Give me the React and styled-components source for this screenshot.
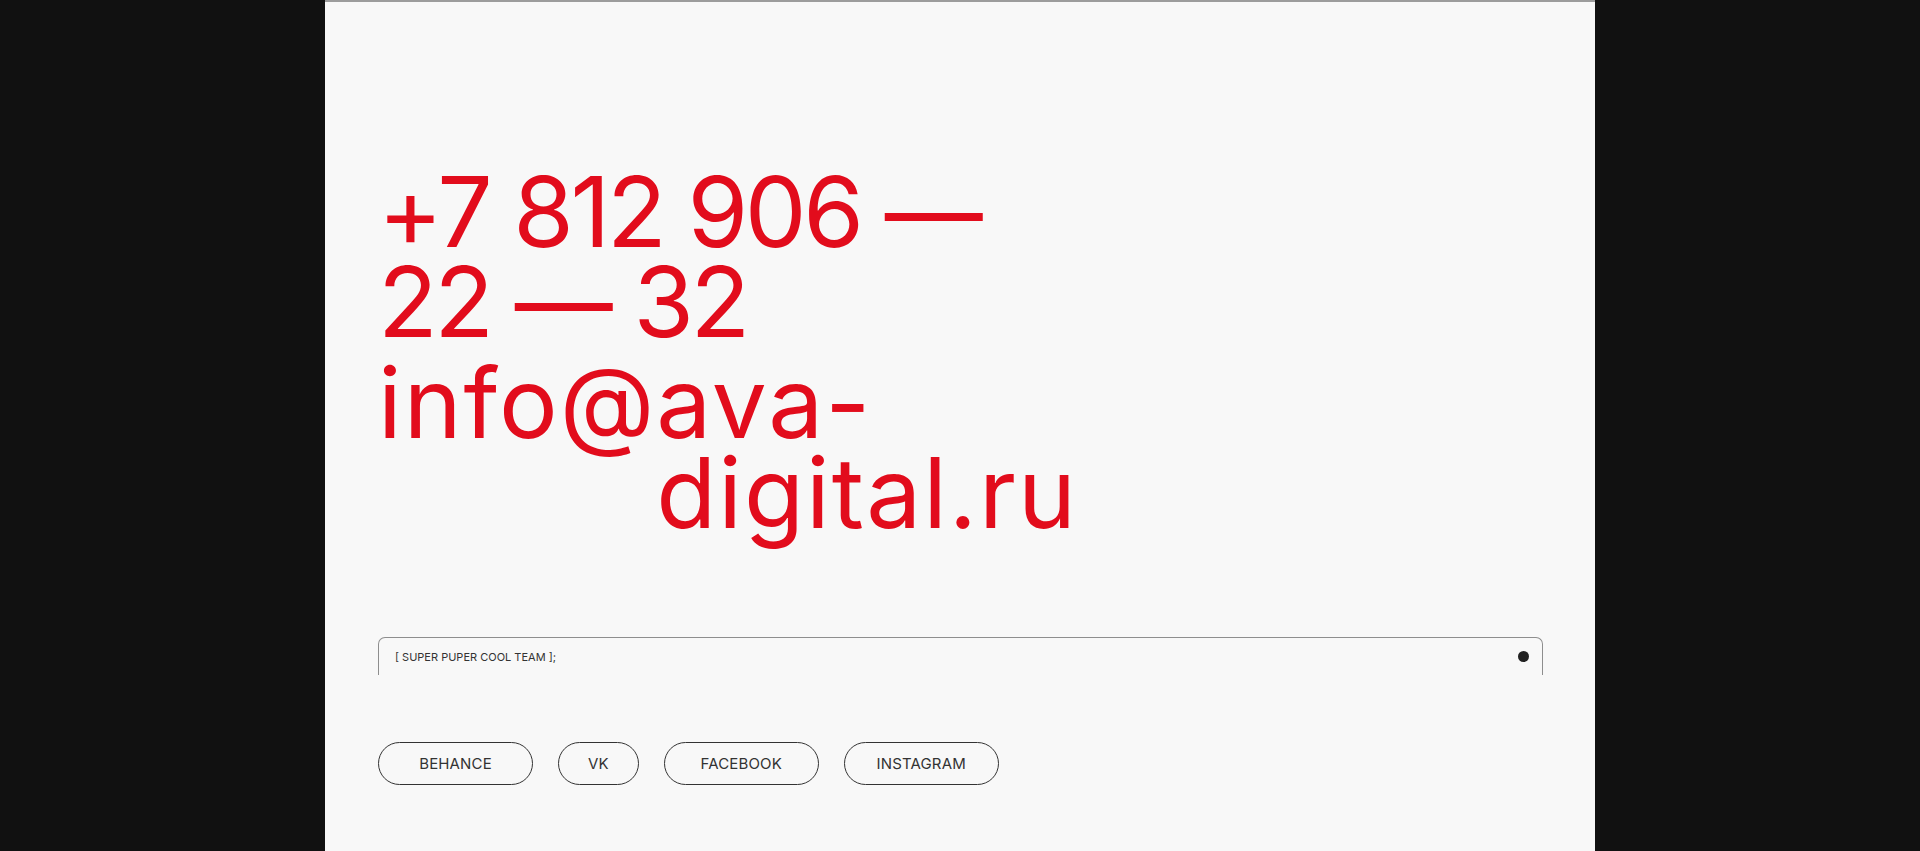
import React from "react";
import styled, { createGlobalStyle } from "styled-components";

const GlobalStyle = createGlobalStyle`
    html, body {
        margin: 0;
        padding: 0;
        background: #111111;
    }
    * {
        box-sizing: border-box;
    }
`

const Page = styled.div`
    display: flex;
    justify-content: center;
    min-height: 100vh;
    background: #111111;
`

const Panel = styled.main`
    width: 1270px;
    min-height: 100vh;
    background: #f8f8f8;
    border-top: 2px solid #9c9c9c;
    padding: 165px 52px 0 53px;
    display: flex;
    flex-direction: column;
    font-family: Inter, "Liberation Sans", sans-serif;
`

const Contacts = styled.div`
    color: #e20c1c;
    font-size: 98px;
    font-weight: 400;
    line-height: 90px;
`

const Phone = styled.div`
    margin-bottom: 11px;
    letter-spacing: -0.035em;
`

const Email = styled.div`
    display: flex;
    align-items: flex-start;
    letter-spacing: 0.02em;
`

const Domain = styled.span`
    display: block;
`

const TeamBar = styled.div`
    margin-top: 99px;
    height: 38px;
    display: flex;
    align-items: center;
    justify-content: space-between;
    padding: 0 13px 0 16px;
    border: 1px solid #8e8e8e;
    border-bottom: none;
    border-radius: 7px 7px 0 0;
`

const TeamLabel = styled.span`
    font-size: 11px;
    color: #333333;
    letter-spacing: 0;
`

const Dot = styled.span`
    width: 11px;
    height: 11px;
    border-radius: 50%;
    background: #222222;
`

const Socials = styled.nav`
    display: flex;
    gap: 25px;
    margin-top: 67px;
`

const SocialButton = styled.a`
    min-width: ${props => props.compact ? '80px' : '155px'};
    height: 43px;
    padding: 0 29px;
    display: flex;
    align-items: center;
    justify-content: center;
    border: 1.5px solid #333333;
    border-radius: 22px;
    font-size: 15px;
    color: #333333;
    text-transform: uppercase;
    text-decoration: none;
    letter-spacing: 0.01em;
`

const socials = ['Behance', 'VK', 'Facebook', 'Instagram']

const App = () => {

    return (
        <Page>
            <GlobalStyle/>
            <Panel>
                <Contacts>
                    <Phone>
                        +7 812 906 —<br/>
                        22 — 32
                    </Phone>
                    <Email>
                        <span>info@</span>
                        <Domain>ava-<br/>digital.ru</Domain>
                    </Email>
                </Contacts>
                <TeamBar>
                    <TeamLabel>[ SUPER PUPER COOL TEAM ];</TeamLabel>
                    <Dot/>
                </TeamBar>
                <Socials>
                    {socials.map(name => (
                        <SocialButton key={name} href="#" compact={name === 'VK'}>{name}</SocialButton>
                    ))}
                </Socials>
            </Panel>
        </Page>
    )

}

export default App
